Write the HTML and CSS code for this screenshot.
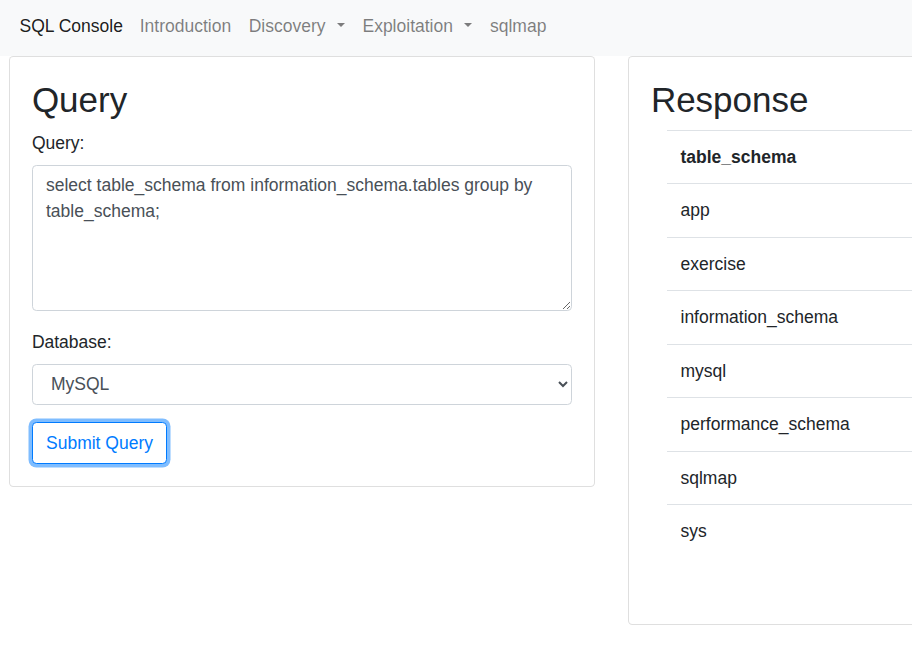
FILE: index.html
```html
<!DOCTYPE html>
<html lang="en">
<head>
<meta charset="utf-8">
<title>SQL Console</title>
<link rel="stylesheet" href="styles.css">
</head>
<body>
<nav class="navbar">
  <a class="brand" href="#">SQL Console</a>
  <a class="nav-link" href="#">Introduction</a>
  <a class="nav-link" href="#">Discovery<span class="caret"></span></a>
  <a class="nav-link" href="#">Exploitation<span class="caret"></span></a>
  <a class="nav-link" href="#">sqlmap</a>
</nav>
<main class="main">
  <section class="card card-query">
    <h1 class="title">Query</h1>
    <form class="form">
      <div class="form-group">
        <label class="label" for="q">Query:</label>
        <textarea id="q" class="control textarea" rows="5">select table_schema from information_schema.tables group by table_schema;</textarea>
      </div>
      <div class="form-group">
        <label class="label" for="db">Database:</label>
        <select id="db" class="control select">
          <option>MySQL</option>
        </select>
      </div>
      <button type="button" class="btn">Submit Query</button>
    </form>
  </section>
  <section class="card card-response">
    <h1 class="title">Response</h1>
    <table class="table">
      <tr><th>table_schema</th></tr>
      <tr><td>app</td></tr>
      <tr><td>exercise</td></tr>
      <tr><td>information_schema</td></tr>
      <tr><td>mysql</td></tr>
      <tr><td>performance_schema</td></tr>
      <tr><td>sqlmap</td></tr>
      <tr><td>sys</td></tr>
    </table>
  </section>
</main>
</body>
</html>
```
FILE: styles.css
```css
html, body {
  margin: 0;
  padding: 0;
  overflow: hidden;
  background: #fff;
}
body {
  font-family: "Liberation Sans", Arial, sans-serif;
  font-size: 17.5px;
  line-height: 1.5;
  color: #212529;
}
.navbar {
  box-sizing: border-box;
  height: 56px;
  padding: 13px 0 0 19.5px;
  background: #f8f9fa;
  display: flex;
  align-items: flex-start;
  line-height: 26.25px;
  white-space: nowrap;
}
.navbar a {
  text-decoration: none;
}
.brand {
  color: rgba(0, 0, 0, 0.9);
  margin-right: 8px;
}
.nav-link {
  color: rgba(0, 0, 0, 0.5);
  padding: 0 8.75px;
}
.caret {
  display: inline-block;
  width: 0;
  height: 0;
  margin-left: 11.5px;
  vertical-align: 0.3em;
  border-top: 4.6px solid rgba(0, 0, 0, 0.5);
  border-left: 4.3px solid transparent;
  border-right: 4.3px solid transparent;
}
.main {
  display: flex;
  align-items: flex-start;
  gap: 33px;
  padding-left: 9px;
}
.card {
  flex: none;
  box-sizing: border-box;
  width: 586px;
  border: 1px solid rgba(0, 0, 0, 0.125);
  border-radius: 4.4px;
  padding: 21.875px;
  background: #fff;
}
.title {
  margin: 0 0 8.75px;
  font-size: 35px;
  font-weight: 500;
  line-height: 1.2;
}
.form {
  margin: 0;
}
.form-group {
  margin-bottom: 17.5px;
}
.label {
  display: block;
  margin-bottom: 8.75px;
}
.control {
  display: block;
  box-sizing: border-box;
  width: 100%;
  margin: 0;
  font-family: inherit;
  font-size: 17.5px;
  line-height: 1.5;
  color: #495057;
  background: #fff;
  border: 1px solid #ced4da;
  border-radius: 4.4px;
  padding: 6.5625px 13.125px;
}
.textarea {
  height: 146.4px;
  resize: vertical;
}
.select {
  height: 41.4px;
  padding: 6.5625px 8px 6.5625px 14px;
}
.btn {
  display: inline-block;
  font-family: inherit;
  font-size: 17.5px;
  line-height: 1.5;
  color: #007bff;
  background: #fff;
  border: 1px solid #007bff;
  border-radius: 4.4px;
  padding: 6.5625px 13.125px;
  box-shadow: 0 0 0 3.5px rgba(0, 123, 255, 0.5);
  cursor: pointer;
}
.table {
  border-collapse: collapse;
  width: calc(100% - 16.5px);
  margin: 0 0 44.5px 16.5px;
  color: #212529;
}
.table th,
.table td {
  text-align: left;
  padding: 13.125px;
  border-top: 1px solid #dee2e6;
  line-height: 1.5;
}
.table th {
  font-weight: 700;
}
```
